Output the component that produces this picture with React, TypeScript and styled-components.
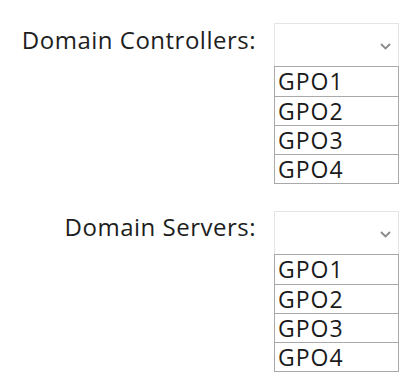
import React from "react";
import styled, { createGlobalStyle } from "styled-components";

const GlobalStyle = createGlobalStyle`
  body {
    margin: 0;
    background: #ffffff;
    font-family: "Open Sans", "Noto Sans", sans-serif;
    color: #1e1e1e;
  }
`;

const Page = styled.div`
  display: flex;
  flex-direction: column;
  gap: 27px;
  padding-top: 23px;
`;

const Group = styled.div`
  display: grid;
  grid-template-columns: 256px 125px;
  column-gap: 18px;
  align-items: start;
`;

const Label = styled.div<{ $offset: number }>`
  text-align: right;
  font-size: 24px;
  line-height: 32px;
  padding-top: ${(p) => p.$offset}px;
  letter-spacing: 0.5px;
  white-space: nowrap;
`;

const Dropdown = styled.div`
  display: flex;
  flex-direction: column;
`;

const Select = styled.div`
  height: 43px;
  box-sizing: border-box;
  border: 1px solid #e4e4e4;
  border-bottom: none;
  display: flex;
  align-items: center;
  justify-content: flex-end;
  padding-right: 7px;
  padding-top: 2px;
`;

const List = styled.div`
  display: flex;
  flex-direction: column;
  border: 1px solid #a9a9a9;
`;

const Item = styled.div`
  height: 29px;
  box-sizing: border-box;
  padding-left: 3px;
  font-size: 23px;
  line-height: 28px;
  letter-spacing: 1px;
  color: #1a1a1a;
  & + & {
    border-top: 1px solid #a9a9a9;
  }
`;

const Chevron = () => (
  <svg width="11" height="7" viewBox="0 0 11 7" aria-hidden>
    <path d="M1 1 L5.5 5.5 L10 1" fill="none" stroke="#8a8a8a" strokeWidth="1.8" />
  </svg>
);

const groups = [
  { label: "Domain Controllers:", offset: 1 },
  { label: "Domain Servers:", offset: -2 },
];
const gpos = ["GPO1", "GPO2", "GPO3", "GPO4"];

export default function App() {
  return (
    <>
      <GlobalStyle />
      <Page>
        {groups.map((g) => (
          <Group key={g.label}>
            <Label $offset={g.offset}>{g.label}</Label>
            <Dropdown>
              <Select>
                <Chevron />
              </Select>
              <List>
                {gpos.map((p) => (
                  <Item key={p}>{p}</Item>
                ))}
              </List>
            </Dropdown>
          </Group>
        ))}
      </Page>
    </>
  );
}
